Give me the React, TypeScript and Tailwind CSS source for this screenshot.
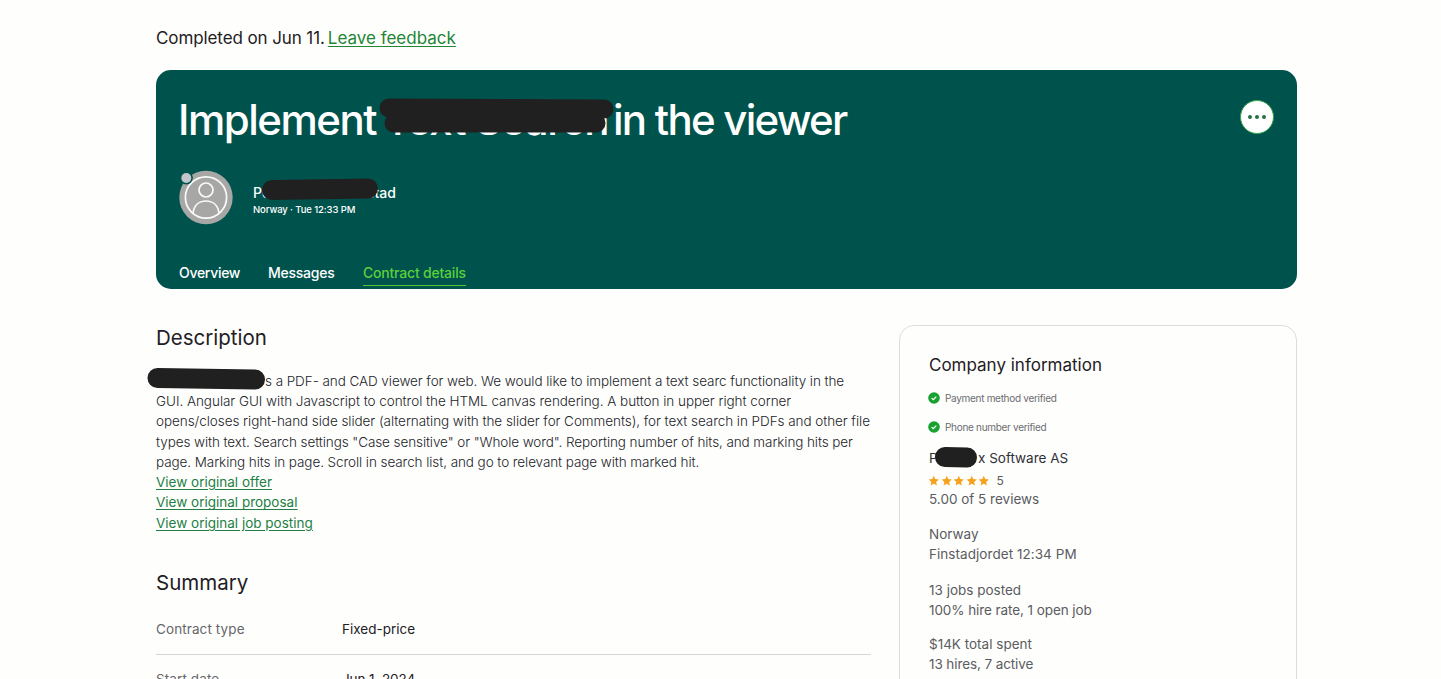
import React from "react";

const STAR = "M12 1.5l3.1 7 7.6.8-5.7 5.1 1.6 7.5L12 18.1 5.4 21.9 7 14.4 1.3 9.3l7.6-.8z";

function Verified({ children }: { children: React.ReactNode }) {
  return (
    <div className="-ml-px flex h-[14px] items-center gap-[5px] text-[10px] tracking-[-0.3px] text-[#6b6c70]">
      <svg className="h-3 w-3" viewBox="0 0 12 12">
        <circle cx="6" cy="6" r="5.8" fill="#18a030" />
        <path d="M3.6 6.1l1.7 1.6 3-3.1" fill="none" stroke="#fff" strokeWidth="1.3" />
      </svg>
      {children}
    </div>
  );
}

function Lines({ items, className }: { items: [string, string][]; className: string }) {
  return (
    <div className={className}>
      {items.map(([text, tracking]) => (
        <div key={text} className={`h-5 leading-5 ${tracking}`}>{text}</div>
      ))}
    </div>
  );
}

const description: [string, string][] = [
  ["GUI. Angular GUI with Javascript to control the HTML canvas rendering. A button in upper right corner", "tracking-[-0.04px]"],
  ["opens/closes right-hand side slider (alternating with the slider for Comments), for text search in PDFs and other file", "tracking-[-0.055px]"],
  ["types with text. Search settings \"Case sensitive\" or \"Whole word\". Reporting number of hits, and marking hits per", "tracking-[-0.09px]"],
  ["page. Marking hits in page. Scroll in search list, and go to relevant page with marked hit.", "tracking-[-0.08px]"],
];

export default function App() {
  return (
    <div className="h-[679px] w-[1441px] overflow-hidden whitespace-nowrap bg-[#fefefd] pl-[156px] pt-[27px] font-['Inter','Liberation_Sans',sans-serif] text-[#1f2024]">
      <div className="flex h-6 items-center gap-[3px] text-[17px]">
        <span className="tracking-[-0.1px]">Completed on Jun 11.</span>
        <a className="text-[#238636] underline underline-offset-2">Leave feedback</a>
      </div>

      <header className="relative mt-[19px] flex h-[219px] w-[1141px] flex-col rounded-[15px] bg-[#00534d] pl-[22px] font-medium text-white">
        <div className="flex pt-[24px]">
          <h1 className="flex h-[51px] w-[1062px] items-center text-[42px]">
            <span className="w-[206px] tracking-[-1.5px]">Implement</span>
            <span className="w-[229px] tracking-[-1.3px]">Text Search</span>
            <span className="tracking-[-1.75px]">in the viewer</span>
          </h1>
          <button className="mt-[6px] flex h-[34px] w-[34px] items-center justify-center gap-[3px] rounded-full border border-[#34a64a] bg-white">
            <i className="h-1 w-1 rounded-full bg-[#267044]" />
            <i className="h-1 w-1 rounded-full bg-[#267044]" />
            <i className="h-1 w-1 rounded-full bg-[#267044]" />
          </button>
        </div>
        <div className="mt-[25px] flex h-[55px]">
          <svg className="h-[55px] w-[55px]" viewBox="0 0 55 55">
            <circle cx="28" cy="27.5" r="26.7" fill="#a7a7a5" />
            <g fill="none" stroke="#fafafa" strokeWidth="1.7">
              <circle cx="28" cy="27.5" r="20.6" />
              <circle cx="28" cy="20" r="7" />
              <path d="M15 43.5v-.5c1-7 5.500-12 13-12s12 5 13 12v.5" />
            </g>
            <circle cx="8.300" cy="8" r="6.500" fill="#00534d" />
            <circle cx="8.300" cy="8" r="5" fill="#c4c6cc" />
          </svg>
          <div className="ml-5 pt-[13px]">
            <div className="flex h-[18px] items-center text-[14px]">
              <span className="w-[114px]">Pe</span>
              <span>stad</span>
            </div>
            <div className="mt-px flex h-4 items-center text-[9.5px] tracking-[-0.1px]">Norway · Tue 12:33 PM</div>
          </div>
        </div>
        <nav className="mt-[34px] flex text-[14px]">
          <a className="h-[27px] w-[90px] pl-px leading-7 tracking-[-0.3px]">Overview</a>
          <a className="h-[27px] w-[95px] leading-7 tracking-[-0.25px]">Messages</a>
          <a className="h-[27px] w-[103px] border-b border-[#51c72f] leading-7 tracking-[-0.2px] text-[#5bd03a]">Contract details</a>
        </nav>
      </header>

      <div className="flex">
        <main className="w-[715px] pt-[35px]">
          <h2 className="h-7 text-[20.5px] leading-7">Description</h2>
          <div className="mt-[19px] text-[13.5px] font-light text-[#232429]">
            <div className="h-5 pl-[109px] leading-5 tracking-[-0.067px]">s a PDF- and CAD viewer for web. We would like to implement a text searc functionality in the</div>
            <Lines items={description} className="flex flex-col gap-[0.3px]" />
          </div>
          <div className="flex flex-col gap-[0.6px] text-[13.5px] text-[#1f7f45] underline underline-offset-2">
            <a className="h-5 leading-5">View original offer</a>
            <a className="h-5 leading-5">View original proposal</a>
            <a className="h-5 leading-5">View original job posting</a>
          </div>
          <h2 className="mt-[36px] h-7 text-[20.5px] leading-7">Summary</h2>
          <div className="mt-[7px] flex h-[51px] items-center border-b border-[#d5d6d8] text-[13.5px]">
            <span className="w-[186px] tracking-[0.1px] text-[#66676b]">Contract type</span>
            <span>Fixed-price</span>
          </div>
          <div className="flex h-[48px] items-center text-[13.5px]">
            <span className="w-[186px] tracking-[0.1px] text-[#66676b]">Start date</span>
            <span className="tracking-[-0.1px]">Jun 1, 2024</span>
          </div>
        </main>

        <aside className="ml-7 mt-9 h-[400px] w-[398px] rounded-[15px] border border-[#dcdddf] pl-[29px] pt-[27px] text-[13.5px] text-[#5b5c60]">
          <h3 className="h-6 text-[17px] leading-6 text-[#1f2024]">Company information</h3>
          <div className="mt-[14px]"><Verified>Payment method verified</Verified></div>
          <div className="mt-[15px]"><Verified>Phone number verified</Verified></div>
          <div className="mt-[14px] flex h-5 items-center text-[#303136]">
            <span className="w-[49px]">P</span>
            <span>x Software AS</span>
          </div>
          <div className="-ml-px mt-[5px] flex h-4 items-center text-[12px]">
            {[0, 1, 2, 3, 4].map((n) => (
              <svg key={n} className="mr-px h-[11.500px] w-[11.500px]" viewBox="0 0 24 24"><path d={STAR} fill="#f5a21f" /></svg>
            ))}
            <span className="ml-[6px]">5</span>
          </div>
          <div className="h-5 leading-5">5.00 of 5 reviews</div>
          <Lines className="mt-[15px]" items={[["Norway", "tracking-[0px]"], ["Finstadjordet 12:34 PM", "tracking-[0.05px]"]]} />
          <Lines className="mt-[16px]" items={[["13 jobs posted", "tracking-[0px]"], ["100% hire rate, 1 open job", "tracking-[-0.08px]"]]} />
          <Lines className="mt-[14px]" items={[["$14K total spent", "tracking-[0px]"], ["13 hires, 7 active", "tracking-[-0.1px]"]]} />
        </aside>
      </div>

      <svg className="pointer-events-none absolute left-0 top-0 h-[679px] w-[1441px]" viewBox="0 0 1441 679" fill="none" stroke="#202020" strokeLinecap="round">
        <path d="M389 108L604 109" strokeWidth="19" />
        <path d="M394 123L596 123" strokeWidth="19" />
        <path d="M272 190L368 188.500" strokeWidth="20" />
        <path d="M157.500 378L255 379.500" strokeWidth="20" />
        <path d="M945 457L967 457.500" strokeWidth="20" />
      </svg>
    </div>
  );
}
